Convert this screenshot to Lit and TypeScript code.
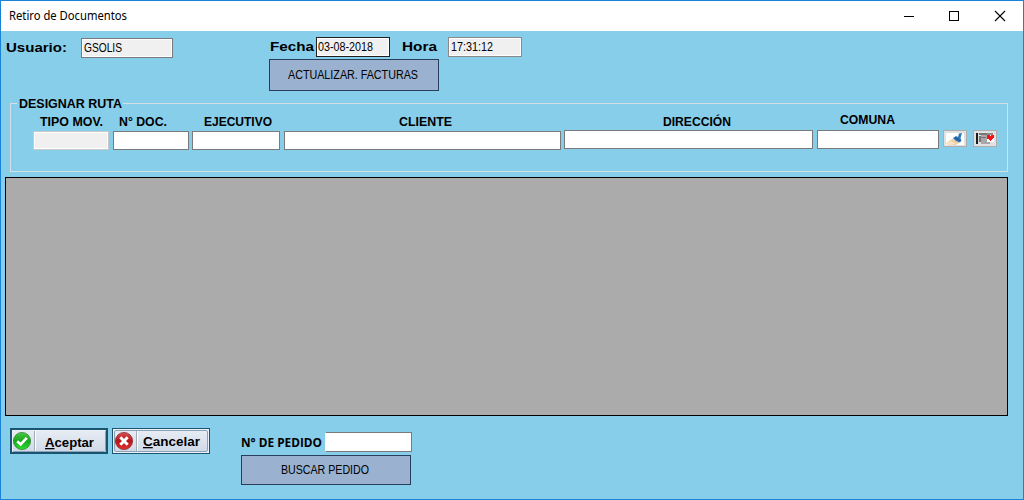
import { LitElement, html, css, svg } from "lit";
import { customElement, property } from "lit/decorators.js";

/* One line of text set to an exact advance width. */
@customElement("fit-text")
class FitText extends LitElement {
  @property() text = "";
  @property() key = "";
  @property({ type: Number }) w = 50;
  @property({ type: Number }) base = 12;
  static styles = css`
    :host { display: block; flex: none; }
    svg { display: block; overflow: visible; }
    text { fill: currentColor; white-space: pre; }
    .key { text-decoration: underline; }
  `;
  render() {
    return html`<svg width=${this.w} height="16">
      ${this.key
        ? svg`<text y=${this.base} textLength=${this.w} lengthAdjust="spacingAndGlyphs"><tspan class="key">${this.key}</tspan><tspan>${this.text}</tspan></text>`
        : svg`<text y=${this.base} textLength=${this.w} lengthAdjust="spacingAndGlyphs">${this.text}</text>`}
    </svg>`;
  }
}

const okIcon = html`<svg class="round" viewBox="0 0 20 20">
  <defs><linearGradient id="g" x1="0" y1="0" x2="0" y2="1"><stop offset="0" stop-color="#48c848"/><stop offset=".5" stop-color="#16a81c"/><stop offset="1" stop-color="#2ee02e"/></linearGradient></defs>
  <circle cx="10" cy="10" r="8.6" fill="url(#g)" stroke="#35863a" stroke-width=".8"/>
  <path d="M5.2 10.3 8.6 13.4 14.8 6.8" fill="none" stroke="#fff" stroke-width="2.7"/></svg>`;
const cancelIcon = html`<svg class="round" viewBox="0 0 20 20">
  <defs><linearGradient id="r" x1="0" y1="0" x2="0" y2="1"><stop offset="0" stop-color="#d85050"/><stop offset=".5" stop-color="#b81418"/><stop offset="1" stop-color="#e43030"/></linearGradient></defs>
  <circle cx="10" cy="10" r="8.6" fill="url(#r)" stroke="#8a3034" stroke-width=".8"/>
  <path d="M6.3 6.3 13.7 13.7M13.7 6.3 6.3 13.7" fill="none" stroke="#fff" stroke-width="3"/></svg>`;

const brushIcon = html`<svg width="18" height="12" viewBox="0 0 18 12">
  <path d="M0 0h18v12H0z" fill="#fff"/>
  <path d="M0 10.5 3 8 8 5 11 6 14 8.5 13 10 10 12H2Z" fill="#efd2a4"/>
  <path d="M1 10 5 8 9 11 3 12Z" fill="#f9e6ca"/>
  <path d="M7 5 10 3 12 4 13 0.5 16 0 15 3.5 14.5 5 15.5 8 13.5 9.5 10 8Z" fill="#2f78bc"/>
  <path d="M9 4.8 14 7.5" stroke="#1c5494" stroke-width="1.2"/></svg>`;
const listIcon = html`<svg width="20" height="13" viewBox="0 0 20 13" shape-rendering="crispEdges">
  <path d="M1 1h2v11H1z" fill="#1c1c1c"/><path d="M3 1h1v11H3z" fill="#ddd"/>
  <path d="M4 1h8v2H4zM4 4h2v6H4z" fill="#777"/>
  <path d="M6 3h6v6H6zM6 9h9v3H6z" fill="#a8a8a8"/><path d="M12 1h6v2h-6z" fill="#8c8c8c"/>
  <path d="M6 5h5v1H6z" fill="#777"/><path d="M12 3h7v7h-7z" fill="#fff"/>
  <path d="M12 3h3v1h1V3h3v3h-1v1h-1v1h-1v1h-1V8h-1V7h-2z" fill="#f21414"/></svg>`;

const columns = [
  { name: "TIPO MOV.", x: 7, w: 63, cls: "off" },
  { name: "N° DOC.", x: 6, w: 48, cls: "" },
  { name: "EJECUTIVO", x: 12, w: 68, cls: "" },
  { name: "CLIENTE", x: 115, w: 53, cls: "" },
  { name: "DIRECCIÓN", x: 99, w: 68, cls: "up" },
  { name: "COMUNA", x: 23, w: 55, cls: "up high" },
];

@customElement("app-root")
class AppRoot extends LitElement {
  static styles = css`
    * { box-sizing: border-box; }
    :host { display: block; width: 1024px; height: 500px; font: 12px "Liberation Sans", sans-serif; color: #000; }
    .window { height: 500px; border: 1px solid #1883d7; background: #87ceeb; display: flex; flex-direction: column; overflow: hidden; }
    .title { height: 30px; flex: none; background: #fff; display: flex; padding: 7px 0 0 8px; font: 12px "Noto Sans", sans-serif; }
    .controls { margin-left: auto; }
    .b { font-weight: bold; }
    .head { height: 72px; flex: none; display: flex; align-items: flex-start; padding: 6px 0 0 5px; }
    .big { font-size: 13.4px; font-weight: bold; padding-top: 2px; }
    .field { height: 20px; border: 1px solid #7a7a7a; background: #fff; }
    .ro { background: #f0f0f0; box-shadow: inset 0 0 0 1px #fff; padding: 2px 0 0 2px; }
    .user { width: 92px; margin: 1px 96px 0 14px; }
    .middle { width: 253px; }
    .dates { display: flex; margin-left: 1px; }
    .date { width: 74px; margin: 0 12px 0 2px; border-color: #202020; padding-left: 1px; }
    .time { width: 74px; margin-left: 11px; border-color: #8a8a8a; }
    .action { width: 170px; background: #9ab2cf; border: 1px solid #293e5b; display: flex; justify-content: center; }
    .update { height: 32px; margin-top: 2px; padding: 7px 3px 0 0; }
    .group { height: 69px; flex: none; margin: 0 15px 0 9px; border: 1px solid #d5dfe5; border-top: 0; display: flex; flex-direction: column; }
    .legend { display: flex; height: 16px; margin-top: -7px; flex: none; }
    .legend::before { content: ""; width: 7px; border-top: 1px solid #d5dfe5; margin: 7px 2px 0 -1px; }
    .legend::after { content: ""; flex: 1; border-top: 1px solid #d5dfe5; margin: 7px 0 0 1px; }
    .legend, .col { font-size: 12px; font-weight: bold; }
    .cols { display: grid; grid-template-columns: 80px 79px 92px 280px 253px 126px 30px 24px; padding: 1px 0 0 22px; }
    .col { padding-right: 4px; }
    .col:nth-child(2), .col:nth-child(4) { padding-right: 3px; }
    .name { height: 18px; }
    .name fit-text { margin-left: var(--x); }
    .col .field { height: 19px; }
    .col.off .field { background: #f0f0f0; border-color: #c8c8c8; box-shadow: inset 0 0 0 1px #fff; }
    .col.up .name { height: 17px; }
    .high .name { margin-top: -2px; margin-bottom: 2px; }
    .icon { width: 24px; height: 17px; margin-top: 17px; border: 1px solid #adadad; background: #e1e1e1; display: flex; align-items: center; justify-content: center; }
    .table { height: 239px; flex: none; margin: 5px 15px 0 4px; background: #ababab; border: 1px solid #000; }
    .foot { display: flex; align-items: flex-start; padding: 12px 0 0 9px; }
    .btn { width: 98px; height: 26px; margin-right: 4px; border: 1px solid #195470; background: #edf2f8; padding: 1px; }
    .btn.default { border-width: 2px; padding: 0; }
    .face { height: 22px; border: 1px solid #8ba1b5; border-radius: 2px; background: linear-gradient(#e7ecf3, #d0dae8); display: flex; font-size: 13px; }
    .default .face { border-color: #edf2f8 #8ba1b5 #8ba1b5 #edf2f8; }
    .face fit-text { margin: 3px 0 0 9px; }
    .btn:not(.default) fit-text { margin-left: 5px; }
    .round { width: 20px; height: 20px; flex: none; margin-left: -1px; }
    .sep { width: 2px; flex: none; height: 20px; margin-left: 2px; background: #a2aab8; border-right: 1px solid #fff; }
    .search { margin-left: 27px; padding-top: 4px; }
    .order { display: flex; font: bold 12px "Open Sans", sans-serif; }
    .order fit-text { padding-top: 2px; }
    .order .field { width: 87px; margin-left: 3px; border-left-color: #fff; }
    .find { height: 30px; margin-top: 3px; padding: 6px 3px 0 0; }
  `;
  render() {
    return html`<div class="window">
      <div class="title">
        <fit-text text="Retiro de Documentos" w="118" base="12"></fit-text>
        <svg class="controls" width="119" height="14" fill="none" stroke="#000">
          <path d="M0 8.5h10M45.5 3.5h9v9h-9z" shape-rendering="crispEdges"/>
          <path d="M91 3 101 13M101 3 91 13" stroke-width="1.1"/>
        </svg>
      </div>
      <div class="head">
        <fit-text class="big" text="Usuario:" w="61" base="13"></fit-text>
        <div class="field ro user"><fit-text text="GSOLIS" w="38" base="11"></fit-text></div>
        <div class="middle">
          <div class="dates">
            <fit-text class="big" text="Fecha" w="44" base="12"></fit-text>
            <div class="field ro date"><fit-text text="03-08-2018" w="55" base="11"></fit-text></div>
            <fit-text class="big" text="Hora" w="35" base="12"></fit-text>
            <div class="field ro time"><fit-text text="17:31:12" w="42" base="11"></fit-text></div>
          </div>
          <div class="action update"><fit-text text="ACTUALIZAR. FACTURAS" w="130" base="12"></fit-text></div>
        </div>
      </div>
      <div class="group">
        <div class="legend"><fit-text text="DESIGNAR RUTA" w="103" base="12"></fit-text></div>
        <div class="cols">
          ${columns.map((c) => html`<div class="col ${c.cls}">
            <div class="name" style="--x:${c.x}px"><fit-text text=${c.name} w=${c.w} base="13"></fit-text></div>
            <div class="field"></div>
          </div>`)}
          <div class="icon">${brushIcon}</div>
          <div class="icon">${listIcon}</div>
        </div>
      </div>
      <div class="table"></div>
      <div class="foot">
        <div class="btn default"><div class="face">${okIcon}<div class="sep"></div><fit-text class="b" key="A" text="ceptar" w="49" base="13"></fit-text></div></div>
        <div class="btn"><div class="face">${cancelIcon}<div class="sep"></div><fit-text class="b" key="C" text="ancelar" w="57" base="12"></fit-text></div></div>
        <div class="search">
          <div class="order"><fit-text text="N° DE PEDIDO" w="81" base="13"></fit-text><div class="field"></div></div>
          <div class="action find"><fit-text text="BUSCAR PEDIDO" w="88" base="12"></fit-text></div>
        </div>
      </div>
    </div>`;
  }
}
